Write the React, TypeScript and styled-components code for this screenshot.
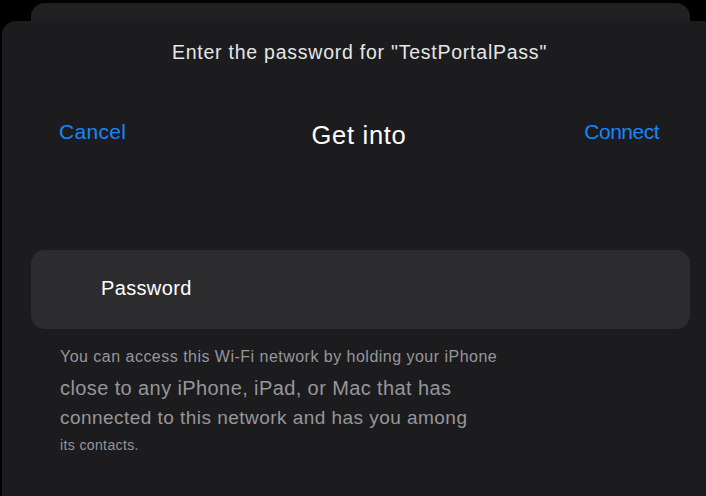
import React from 'react';
import styled, { createGlobalStyle } from 'styled-components';

const GlobalStyle = createGlobalStyle`
  html, body {
    margin: 0;
    padding: 0;
    background: #000;
  }
  body {
    font-family: "Liberation Sans", Arial, sans-serif;
    -webkit-font-smoothing: antialiased;
  }
`;

const Screen = styled.div`
  width: 706px;
  height: 496px;
  overflow: hidden;
  display: flex;
  flex-direction: column;
  background: #000;
`;

// the sheet sitting behind the current one
const BackCard = styled.div`
  height: 18px;
  margin: 3px 16px 0 31px;
  background: #202022;
  border-radius: 14px 14px 0 0;
`;

const Sheet = styled.div`
  flex: 1;
  display: flex;
  flex-direction: column;
  margin: 0 -11px 0 2px;
  padding-top: 19px;
  background: #1c1c1e;
  border-radius: 14px 14px 0 0;
`;

const Prompt = styled.div`
  text-align: center;
  font-size: 19.5px;
  line-height: 24px;
  letter-spacing: 0.76px;
  color: #e6e6e8;
`;

const NavBar = styled.div`
  display: grid;
  grid-template-columns: 1fr auto 1fr;
  align-items: center;
  height: 40px;
  margin-top: 48px;
  padding: 0 58px 0 57px;
`;

const NavButton = styled.button<{ $align: 'left' | 'right'; $spacing: number }>`
  justify-self: ${(p) => (p.$align === 'left' ? 'start' : 'end')};
  padding: 0;
  border: none;
  background: none;
  font-family: inherit;
  font-size: 21px;
  line-height: 26px;
  letter-spacing: ${(p) => p.$spacing}px;
  color: #1a86f6;
  cursor: pointer;
`;

const NavTitle = styled.div`
  font-size: 25.5px;
  line-height: 30px;
  letter-spacing: 0.7px;
  padding-top: 5px;
  color: #fff;
`;

const Field = styled.div`
  display: flex;
  align-items: center;
  height: 79px;
  margin: 98px 27px 0 29px;
  padding: 0 0 3px 70px;
  box-sizing: border-box;
  background: #2c2c2e;
  border-radius: 14px;
`;

const FieldLabel = styled.span`
  font-size: 20px;
  letter-spacing: 0.35px;
  color: #fff;
`;

const Footer = styled.div`
  margin-top: 12px;
  padding-left: 58px;
  color: #96969b;
`;

const FootLine = styled.div<{ $size: number; $height: number; $spacing: number }>`
  font-size: ${(p) => p.$size}px;
  line-height: ${(p) => p.$height}px;
  letter-spacing: ${(p) => p.$spacing}px;
  white-space: nowrap;
`;

const footLines = [
  { text: 'You can access this Wi-Fi network by holding your iPhone', size: 16, height: 32, spacing: 0.48 },
  { text: 'close to any iPhone, iPad, or Mac that has', size: 20, height: 30, spacing: 0.4 },
  { text: 'connected to this network and has you among', size: 19, height: 29, spacing: 0.46 },
  { text: 'its contacts.', size: 14, height: 26, spacing: 0.38 },
];

const App: React.FC = () => {
  return (
    <>
      <GlobalStyle />
      <Screen>
        <BackCard />
        <Sheet>
          <Prompt>Enter the password for "TestPortalPass"</Prompt>
          <NavBar>
            <NavButton $align="left" $spacing={0.3}>Cancel</NavButton>
            <NavTitle>Get into</NavTitle>
            <NavButton $align="right" $spacing={-0.5}>Connect</NavButton>
          </NavBar>
          <Field>
            <FieldLabel>Password</FieldLabel>
          </Field>
          <Footer>
            {footLines.map((line) => (
              <FootLine
                key={line.text}
                $size={line.size}
                $height={line.height}
                $spacing={line.spacing}
              >
                {line.text}
              </FootLine>
            ))}
          </Footer>
        </Sheet>
      </Screen>
    </>
  );
};

export default App;
